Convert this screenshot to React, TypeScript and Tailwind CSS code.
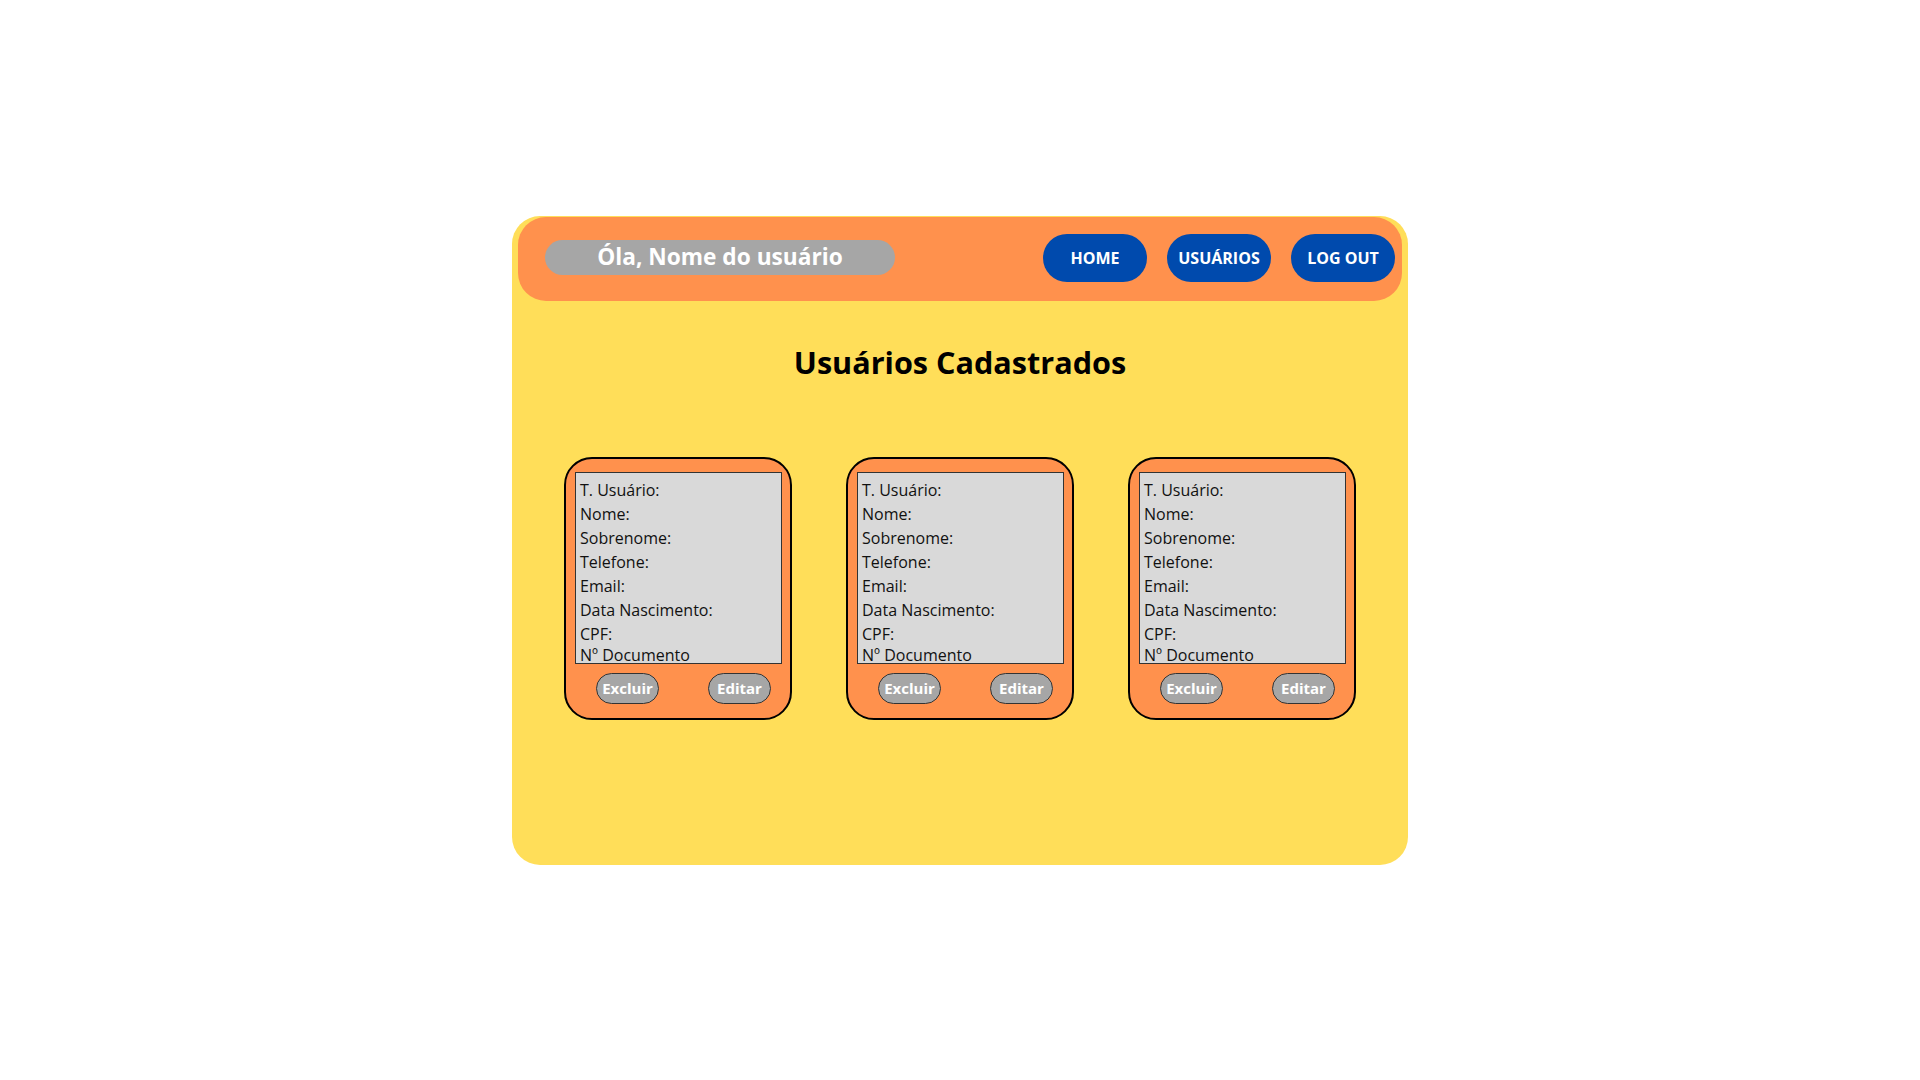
import React from 'react';

const FIELDS = [
  'T. Usuário:',
  'Nome:',
  'Sobrenome:',
  'Telefone:',
  'Email:',
  'Data Nascimento:',
  'CPF:',
];

const UserCard: React.FC = () => {
  return (
    <div className="w-[228px] h-[263px] bg-[#ff914d] border-2 border-black rounded-[28px] flex flex-col">
      {/* Info box */}
      <div className="mt-[13px] ml-[9px] mr-[8px] h-[192px] bg-[#d9d9d9] border border-[#333333] overflow-hidden pl-[4px] pt-[5px] text-[16px] leading-[24px] text-[#111111]">
        {FIELDS.map((f) => (
          <div key={f}>{f}</div>
        ))}
        <div className="-mt-[3px]">Nº Documento</div>
      </div>

      {/* Actions */}
      <div className="flex justify-between pl-[30px] pr-[19px] mt-[9px]">
        <button className="w-[63px] h-[31px] rounded-full bg-[#a6a6a6] border border-[#333333] text-white text-[15px] font-bold">
          Excluir
        </button>
        <button className="w-[63px] h-[31px] rounded-full bg-[#a6a6a6] border border-[#333333] text-white text-[15px] font-bold">
          Editar
        </button>
      </div>
    </div>
  );
};

export default function App() {
  return (
    <div className="min-h-screen w-full bg-white flex items-center justify-center font-['Open_Sans',sans-serif]">
      <div className="w-[896px] h-[649px] bg-[#ffde59] rounded-[28px] flex flex-col">
        {/* Header */}
        <div className="mx-[6px] mt-[1px] h-[84px] bg-[#ff914d] rounded-[28px] flex items-center justify-between pl-[27px] pr-[7px]">
          <div className="w-[350px] h-[35px] rounded-full bg-[#a6a6a6] flex items-center justify-center text-white font-bold text-[22.7px] -mt-[3px]">
            Óla, Nome do usuário
          </div>
          <nav className="flex gap-[20px] -mt-[1px]">
            {['HOME', 'USUÁRIOS', 'LOG OUT'].map((l) => (
              <button
                key={l}
                className="w-[104px] h-[48px] rounded-full bg-[#004aad] text-white font-bold text-[16px]"
              >
                {l}
              </button>
            ))}
          </nav>
        </div>

        <h1 className="mt-[41px] text-center text-[30.6px] leading-[40px] font-bold text-black">
          Usuários Cadastrados
        </h1>

        {/* Cards */}
        <div className="mt-[75px] flex justify-center gap-[54px]">
          <UserCard />
          <UserCard />
          <UserCard />
        </div>
      </div>
    </div>
  );
}
